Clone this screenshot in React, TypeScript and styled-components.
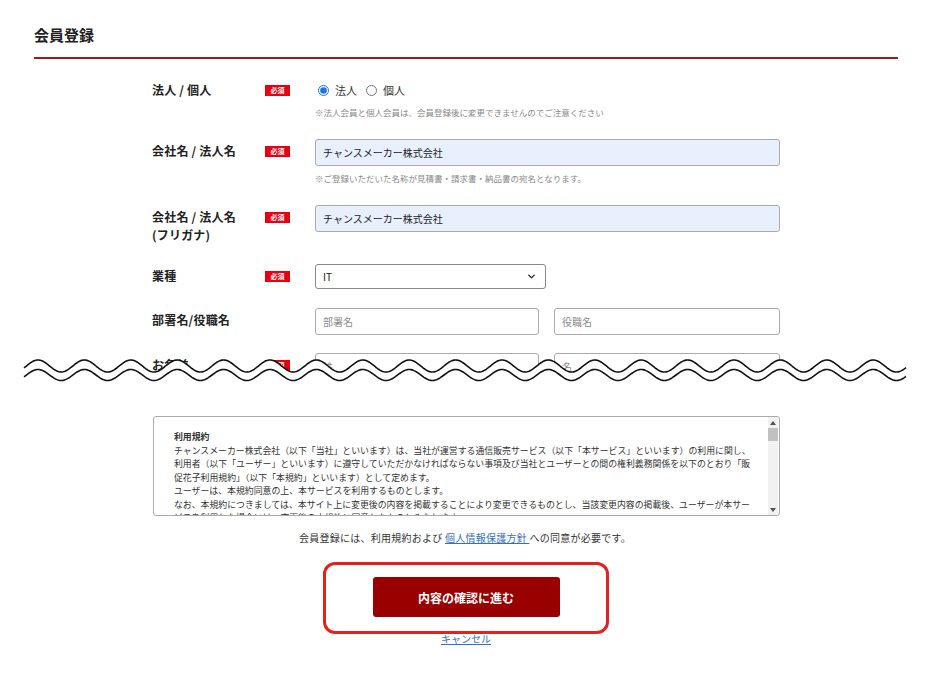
import React from "react";
import styled, { createGlobalStyle } from "styled-components";
import { ChevronDown } from "lucide-react";

const GlobalStyle = createGlobalStyle`
  html, body { margin: 0; padding: 0; background: #fff; }
  body { font-family: "Noto Sans CJK JP", "Noto Sans", sans-serif; color: #222; }
  * { box-sizing: border-box; }
`;

const Page = styled.div`
  width: 930px;
  padding-bottom: 40px;
`;

const Header = styled.h1`
  margin: 0 32px 0 34px;
  padding: 26px 0 13px;
  font-size: 15px;
  line-height: 18px;
  font-weight: 700;
  color: #222;
  border-bottom: 2px solid #9e1b1b;
`;

const Torn = styled.div`
  position: relative;
  height: 331px;
  overflow: hidden;
`;

const Form = styled.div`
  width: 628px;
  margin: 19px 0 0 152px;
  display: flex;
  flex-direction: column;
`;

const Row = styled.div<{ $gap?: number }>`
  display: grid;
  grid-template-columns: 113px 50px 465px;
  align-items: start;
  margin-top: ${(p) => p.$gap ?? 0}px;
`;

const Label = styled.div`
  font-size: 12px;
  line-height: 18px;
  padding-top: 3px;
  font-weight: 700;
  color: #222;
  letter-spacing: 0.2px;
`;

const BadgeCell = styled.div`
  display: flex;
  padding-top: 7px;
`;

const Badge = styled.span`
  display: flex;
  align-items: center;
  justify-content: center;
  width: 25px;
  height: 11px;
  background: #e60012;
  color: #fff;
  font-size: 7px;
  font-weight: 700;
  line-height: 1;
`;

const Field = styled.div`
  display: flex;
  flex-direction: column;
`;

const RadioLine = styled.div`
  display: flex;
  align-items: center;
  height: 18px;
  margin-top: 3px;
  font-size: 11px;
  color: #333;
`;

const RadioLabel = styled.label`
  display: inline-flex;
  align-items: center;
  margin-right: 6px;
`;

const Radio = styled.input`
  width: 11px;
  height: 11px;
  margin: 0 6px 0 3px;
  accent-color: #1a73e8;
`;

const Note = styled.p<{ $gap?: number }>`
  margin: ${(p) => p.$gap ?? 6}px 0 0;
  font-size: 8.5px;
  line-height: 14px;
  color: #888;
  white-space: nowrap;
`;

const TextInput = styled.input<{ $filled?: boolean }>`
  width: 100%;
  height: 27px;
  padding: 0 7px;
  border: 1px solid #aaa;
  border-radius: 3px;
  background: ${(p) => (p.$filled ? "#e8f0fe" : "#fff")};
  font-family: inherit;
  font-size: 10px;
  color: #222;
  outline: none;
  &::placeholder { color: #8a8a8a; }
`;

const Pair = styled.div`
  display: grid;
  grid-template-columns: 224px 226px;
  gap: 15px;
`;

const SelectWrap = styled.div`
  position: relative;
  width: 231px;
`;

const Select = styled.select`
  appearance: none;
  display: block;
  width: 100%;
  height: 25px;
  padding: 0 7px;
  border: 1px solid #888;
  border-radius: 3px;
  background: #fff;
  font-family: inherit;
  font-size: 10px;
  color: #222;
  outline: none;
`;

const SelectIcon = styled.span`
  position: absolute;
  right: 9px;
  top: 7px;
  display: flex;
  color: #222;
  pointer-events: none;
`;

const WaveSvg = styled.svg`
  position: absolute;
  left: 0;
  bottom: 0;
  display: block;
`;

const Terms = styled.div`
  display: flex;
  width: 627px;
  height: 100px;
  margin: 26px 0 0 153px;
  border: 1px solid #aaa;
  border-radius: 3px;
  overflow: hidden;
`;

const TermsBody = styled.div`
  flex: 1;
  padding: 13px 10px 0 20px;
  overflow: hidden;
  font-size: 8.9px;
  line-height: 13.5px;
  color: #333;
`;

const ScrollRail = styled.div`
  width: 10px;
  margin-right: 1px;
  display: flex;
  flex-direction: column;
  align-items: stretch;
  background: #f1f1f1;
`;

const ScrollArrow = styled.div`
  height: 11px;
  display: flex;
  align-items: center;
  justify-content: center;
  color: #505050;
`;

const ScrollThumb = styled.div`
  height: 13px;
  background: #c1c1c1;
`;

const ScrollSpace = styled.div`
  flex: 1;
`;

const TermsTitle = styled.div`
  font-weight: 700;
  white-space: nowrap;
`;

const TermsLine = styled.div`
  white-space: nowrap;
`;

const Agree = styled.p`
  margin: 15px 0 0;
  text-align: center;
  font-size: 10px;
  line-height: 14px;
  letter-spacing: 0.25px;
  color: #333;
`;

const TextLink = styled.a`
  color: #3470c0;
  text-decoration: underline;
`;

const Actions = styled.div`
  display: flex;
  flex-direction: column;
  align-items: center;
  padding-left: 2px;
  margin-top: 32px;
`;

const Highlight = styled.div`
  position: relative;
`;

const HighlightFrame = styled.div`
  position: absolute;
  inset: -15px -49px -17px -50px;
  border: 3px solid #e3211e;
  border-radius: 12px;
  pointer-events: none;
  z-index: 2;
`;

const Submit = styled.button`
  display: block;
  width: 187px;
  height: 40px;
  border: none;
  border-radius: 3px;
  background: #990000;
  color: #fff;
  font-family: inherit;
  font-size: 12px;
  font-weight: 700;
  cursor: pointer;
`;

const Cancel = styled.a`
  margin-top: 15px;
  font-size: 10px;
  line-height: 14px;
  color: #3470c0;
  text-decoration: underline;
`;

const wave = (c: number, a: number) => {
  const pts: string[] = [];
  for (let x = 24; x <= 906; x += 1) {
    const y = c - a * Math.cos((2 * Math.PI * (x - 38)) / 46.4);
    pts.push(`${x},${y.toFixed(2)}`);
  }
  return pts;
};

const topWave = wave(16, 6);
const bottomWave = wave(25, 5.5);

const termsLines = [
  "チャンスメーカー株式会社（以下「当社」といいます）は、当社が運営する通信販売サービス（以下「本サービス」といいます）の利用に関し、",
  "利用者（以下「ユーザー」といいます）に遵守していただかなければならない事項及び当社とユーザーとの間の権利義務関係を以下のとおり「販",
  "促花子利用規約」（以下「本規約」といいます）として定めます。",
  "ユーザーは、本規約同意の上、本サービスを利用するものとします。",
  "なお、本規約につきましては、本サイト上に変更後の内容を掲載することにより変更できるものとし、当該変更内容の掲載後、ユーザーが本サー",
  "ビスを利用した場合には、変更後の本規約に同意したものとみなします。",
];

export default function App() {
  return (
    <Page>
      <GlobalStyle />
      <Header>会員登録</Header>

      <Torn>
        <Form>
          <Row>
            <Label>法人 / 個人</Label>
            <BadgeCell>
              <Badge>必須</Badge>
            </BadgeCell>
            <Field>
              <RadioLine>
                <RadioLabel>
                  <Radio type="radio" name="kind" defaultChecked />
                  法人
                </RadioLabel>
                <RadioLabel>
                  <Radio type="radio" name="kind" />
                  個人
                </RadioLabel>
              </RadioLine>
              <Note>※法人会員と個人会員は、会員登録後に変更できませんのでご注意ください</Note>
            </Field>
          </Row>

          <Row $gap={20}>
            <Label>会社名 / 法人名</Label>
            <BadgeCell>
              <Badge>必須</Badge>
            </BadgeCell>
            <Field>
              <TextInput $filled defaultValue="チャンスメーカー株式会社" />
              <Note $gap={5}>※ご登録いただいた名称が見積書・請求書・納品書の宛名となります。</Note>
            </Field>
          </Row>

          <Row $gap={20}>
            <Label>
              会社名 / 法人名
              <br />
              (フリガナ)
            </Label>
            <BadgeCell>
              <Badge>必須</Badge>
            </BadgeCell>
            <Field>
              <TextInput $filled defaultValue="チャンスメーカー株式会社" />
            </Field>
          </Row>

          <Row $gap={20}>
            <Label>業種</Label>
            <BadgeCell>
              <Badge>必須</Badge>
            </BadgeCell>
            <Field>
              <SelectWrap>
                <Select defaultValue="IT">
                  <option value="IT">IT</option>
                  <option value="製造">製造</option>
                  <option value="小売">小売</option>
                </Select>
                <SelectIcon>
                  <ChevronDown size={11} strokeWidth={3} />
                </SelectIcon>
              </SelectWrap>
            </Field>
          </Row>

          <Row $gap={19}>
            <Label>部署名/役職名</Label>
            <BadgeCell />
            <Pair>
              <TextInput placeholder="部署名" />
              <TextInput placeholder="役職名" />
            </Pair>
          </Row>

          <Row $gap={18}>
            <Label>お名前</Label>
            <BadgeCell>
              <Badge>必須</Badge>
            </BadgeCell>
            <Pair>
              <TextInput placeholder="姓" />
              <TextInput placeholder="名" />
            </Pair>
          </Row>
        </Form>

        <WaveSvg width="930" height="40" viewBox="0 0 930 40" aria-hidden="true">
          <polygon points={`${topWave.join(" ")} 906,40 24,40`} fill="#fff" />
          <polyline points={topWave.join(" ")} fill="none" stroke="#111" strokeWidth="1.6" />
          <polyline points={bottomWave.join(" ")} fill="none" stroke="#111" strokeWidth="1.6" />
        </WaveSvg>
      </Torn>

      <Terms>
        <TermsBody>
          <TermsTitle>利用規約</TermsTitle>
          {termsLines.map((line, i) => (
            <TermsLine key={i}>{line}</TermsLine>
          ))}
        </TermsBody>
        <ScrollRail aria-hidden="true">
          <ScrollArrow>
            <svg width="6" height="4" viewBox="0 0 6 4">
              <path d="M0 4 L3 0 L6 4 Z" fill="currentColor" />
            </svg>
          </ScrollArrow>
          <ScrollThumb />
          <ScrollSpace />
          <ScrollArrow>
            <svg width="6" height="4" viewBox="0 0 6 4">
              <path d="M0 0 L6 0 L3 4 Z" fill="currentColor" />
            </svg>
          </ScrollArrow>
        </ScrollRail>
      </Terms>

      <Agree>
        会員登録には、利用規約および <TextLink href="#">個人情報保護方針 </TextLink>への同意が必要です。
      </Agree>

      <Actions>
        <Highlight>
          <Submit type="button">内容の確認に進む</Submit>
          <HighlightFrame />
        </Highlight>
        <Cancel href="#">キャンセル</Cancel>
      </Actions>
    </Page>
  );
}
